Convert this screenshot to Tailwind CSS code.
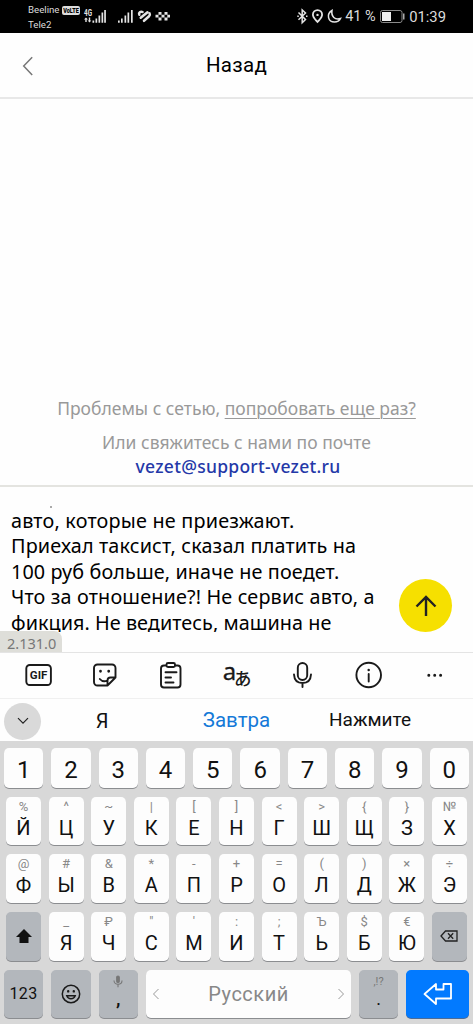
<!DOCTYPE html>
<html lang="ru">
<head>
<meta charset="utf-8">
<title>Назад</title>
<script src="https://cdn.jsdelivr.net/npm/@tailwindcss/browser@4"></script>
</head>
<body class="w-[473px] h-[1024px] overflow-hidden bg-[#fefefe] font-['Roboto',sans-serif] flex flex-col text-[#111]">

<header class="h-[33px] shrink-0 bg-black text-[#dcdcdc] flex items-start pl-7 pr-[27px]">
  <div class="pt-[3px] w-[52px] text-[9.700px] leading-[14.5px] whitespace-nowrap">
    <div class="flex items-center gap-[2px]"><span>Beeline</span><svg class="shrink-0" width="18" height="9" viewBox="0 0 18 9"><rect width="18" height="9" rx="2" fill="#dcdcdc"/><text x="1.200" y="7.300" font-family="Roboto" font-size="7.500" font-weight="900" textLength="15.500" lengthAdjust="spacingAndGlyphs">VoLTE</text></svg></div>
    <div>Tele2</div>
  </div>
  <svg class="ml-[3px] mt-2 shrink-0" width="90" height="18" viewBox="83 8 90 18" fill="#e4e4e4">
    <text x="84" y="16" font-family="Roboto" font-size="8.500" font-weight="700" textLength="8" lengthAdjust="spacingAndGlyphs">4G</text>
    <path d="M86 17.500l2 2h-1.300v2.500h-1.400v-2.500h-1.300zM89.500 22.500l-1.800-2h1.100V17.500h1.400v3h1.100z"/>
    <path d="M92.500 20.500h1.700v2.200h-1.700zM95.500 18.500h1.700v4.200h-1.700zM98.500 15.500h1.700v7.200h-1.700zM101.500 12.500h1.700v10.200h-1.700zM104.200 10h1.700v12.700h-1.700z"/>
    <path d="M118 20.500h1.700v2.200h-1.700zM121 18.500h1.700v4.200h-1.700zM124.500 15.500h1.700v7.200h-1.700zM127.500 12.500h1.700v10.200h-1.700zM131 10h1.700v12.700h-1.700z"/>
    <g fill="none" stroke="#e4e4e4" stroke-width="2.500" stroke-linecap="round"><path d="M139.300 14.800c-1-2 1.300-3.800 3.300-2.800M140.700 17.800L147.500 12.300M144 20.800L149 16.300c1-1 1-2.300.6-3"/></g>
    <path d="M158.500 12h3v2.800h-3zM164.500 12h3v2.800h-3zM155.500 14.800h3v2.800h-3zM161.500 14.800h3v2.800h-3zM167.300 14.800h2.700v2.800h-2.700zM158.500 17.600h3v2.800h-3zM164.500 17.600h3v2.800h-3z"/>
  </svg>
  <svg class="ml-auto mt-2 shrink-0" width="46" height="18" viewBox="297 8 46 18" fill="none" stroke="#e4e4e4" stroke-width="1.500">
    <path d="M299.500 12.500l7 7-3.300 3.200V10l3.300 3-7 6.800"/><path d="M298.300 16.200h1.500M307 16.200h1.500"/>
    <path d="M318.500 22c-2.600-3-4.600-4.700-4.600-7.300a4.600 4.600 0 0 1 9.200 0c0 2.600-2 4.300-4.600 7.300z" stroke-width="1.800"/><circle cx="318.500" cy="14.900" r="1.200" fill="#e4e4e4" stroke="none"/>
    <path d="M333 10.500c-6 3.500-4 11.500 2.500 11.500 3 0 5-1.300 6-3.500-5.500 1.800-9.500-2-8.500-8z"/>
  </svg>
  <span class="ml-[3px] mt-2 text-[14.500px] leading-[18px] w-[35px] whitespace-nowrap">41 %</span>
  <svg class="mt-2 shrink-0" width="26" height="18" viewBox="380 8 26 18"><rect x="380.500" y="10.500" width="21.500" height="12" rx="2" fill="none" stroke="#8a8a8a"/><path d="M382 12h9v9h-9z" fill="#eee"/><path d="M403 13.500h1.500v6H403z" fill="#aaa"/></svg>
  <span class="ml-[3px] mt-2 text-[14.800px] leading-[18px] whitespace-nowrap">01:39</span>
</header>

<nav class="h-[66px] shrink-0 border-b-2 border-[#e8e8e8] grid grid-cols-[60px_1fr_60px] items-center">
  <svg class="ml-[22px] mt-[2px]" width="12" height="22" viewBox="0 0 12 22" fill="none" stroke="#777" stroke-width="1.500"><path d="M10.200 2.200L1.700 11l8.500 9"/></svg>
  <h1 class="text-center text-[20.500px] leading-6 text-black tracking-[0.3px]">Назад</h1>
</nav>

<main class="h-[386px] shrink-0 flex flex-col items-center justify-end pb-[7px] font-['Noto_Sans',sans-serif] text-[17.500px] leading-6 text-[#999] whitespace-nowrap">
  <p>Проблемы с сетью, <a class="underline decoration-1 underline-offset-[3px]">попробовать еще раз?</a></p>
  <p class="mt-[10px]">Или свяжитесь с нами по почте</p>
  <p class="text-[#2438a8] font-medium tracking-[0.27px] pl-[3px]">vezet@support-vezet.ru</p>
</main>

<section class="h-[168px] shrink-0 relative border-t-2 border-[#e4e4e0] border-b border-b-[#e4e4e4] flex">
  <div class="pl-[11px] pt-[21px] h-[145px] overflow-hidden w-[399px] text-[19.800px] leading-[25.400px] tracking-[0.15px] text-black whitespace-nowrap font-['Noto_Sans',sans-serif]">
    <p class="tracking-[0.2px]">авто, которые не приезжают.</p>
    <p>Приехал таксист, сказал платить на</p>
    <p class="tracking-[0.12px]">100 руб больше, иначе не поедет.</p>
    <p>Что за отношение?! Не сервис авто, а</p>
    <p class="tracking-[0.05px]">фикция. Не ведитесь, машина не</p>
  </div>
  <button class="mt-[92px] size-[53px] rounded-full bg-[#f6e000] flex items-center justify-center">
    <svg width="24" height="24" viewBox="0 0 24 24" fill="none" stroke="#222" stroke-width="2.400"><path d="M12 22V3M2.500 12.500L12 3l9.500 9.500"/></svg>
  </button>
  <span class="absolute left-[50px] top-[19px] w-[2px] h-[2px] bg-[#aaa]"></span>
  <span class="absolute left-0 bottom-0 h-[21px] w-[62px] rounded-tr-lg bg-[#deded9] pl-[7px] text-[14.500px] leading-[24px] text-[#777] font-['Noto_Sans',sans-serif]">2.131.0</span>
</section>

<div class="h-[46px] shrink-0 border-b border-[#f0f0f0]">
  <svg width="473" height="45" viewBox="0 653 473 45" fill="none" stroke="#1a1a1a" stroke-width="1.900" stroke-linecap="round" stroke-linejoin="round">
    <rect x="26.300" y="665" width="24.600" height="20" rx="3.500"/>
    <text x="29.800" y="679.300" font-family="Roboto" font-size="11.500" font-weight="700" fill="#1a1a1a" stroke="none" textLength="17.500">GIF</text>
    <path d="M107.500 685.500H97.500a3.500 3.500 0 0 1-3.500-3.500V668a3.500 3.500 0 0 1 3.500-3.500h14.500a3.500 3.500 0 0 1 3.500 3.500v9.500l-8 8v-5a3 3 0 0 1 3-3h5M99.800 679c2 2.300 5 2.800 7.500 1.500"/>
    <path d="M100.500 671.200v.1M108.700 671.200v.1" stroke-width="2.800"/>
    <path d="M166 665.500h-2a3 3 0 0 0-3 3v16a3 3 0 0 0 3 3h13.500a3 3 0 0 0 3-3v-16a3 3 0 0 0-3-3h-2"/><rect x="166.500" y="663" width="8.500" height="4" rx="1.500"/><path d="M165.500 672.300h11M165.500 677.500h5.500M165.500 682.500h8"/>
    <text x="222.800" y="680" font-family="Noto Sans" font-size="24" fill="#1a1a1a" stroke="#1a1a1a" stroke-width=".3">a</text>
    <text x="234" y="684.500" font-family="Noto Sans CJK JP" font-size="17.500" font-weight="500" fill="#1a1a1a" stroke="none">あ</text>
    <rect x="297.800" y="663" width="9.400" height="17" rx="4.700"/><path d="M294 674.500c.3 5.500 3.500 8.500 8.500 8.500s8.200-3 8.500-8.500M302.500 683v4"/>
    <circle cx="368.700" cy="675" r="12.300"/><path d="M368.700 674v7.500"/><path d="M368.700 670v.1" stroke-width="2.500"/>
    <path d="M428.800 675.200v.1M434.700 675.200v.1M440.600 675.200v.1" stroke-width="3"/>
  </svg>
</div>

<div class="h-[42px] shrink-0 flex items-center text-[20px]">
  <button class="ml-1 mt-[2px] size-[37px] rounded-full bg-[#d9d9d9] flex items-center justify-center shrink-0"><svg width="12" height="8" viewBox="0 0 12 8" fill="none" stroke="#222" stroke-width="1.200"><path d="M1 1.200l5 5 5-5"/></svg></button>
  <span class="w-[122px] text-center mt-px">Я</span>
  <span class="w-[147px] text-center mt-px text-[#1479d8] text-[20.500px]">Завтра</span>
  <span class="w-[120px] text-center mt-px text-[19px]">Нажмите</span>
</div>

<div class="grow bg-[#d8d8d8] pt-[7px] flex flex-col">
  <div id="r0" class="flex gap-2 px-1 h-[40px] mb-[8.700px]"></div>
  <div id="r1" class="flex gap-[7.600px] px-[6px] h-[48.700px] mb-[9px]"></div>
  <div id="r2" class="flex gap-[7.600px] px-[6px] h-[48.700px] mb-[9px]"></div>
  <div id="r3" class="flex gap-[7.600px] px-[6px] h-[48.700px] mb-[9px]"></div>
  <div class="flex gap-2 px-1 h-[48.700px]">
    <button class="w-[39px] rounded-[5px] bg-[#b3b7bc] shadow-[0_1px_0_#8b8d90] text-[16px] tracking-[0.3px]">123</button>
    <button class="w-[39.500px] rounded-[5px] bg-[#b3b7bc] shadow-[0_1px_0_#8b8d90] flex items-center justify-center"><svg width="20" height="20" viewBox="0 0 20 20" fill="none" stroke="#1a1a1a" stroke-width="1.500" stroke-linecap="round"><circle cx="10" cy="10" r="8.700"/><path d="M5.800 11.800c1.500 4 6.900 4 8.400 0z"/><path d="M7.200 7.300v.1M12.800 7.300v.1" stroke-width="2.400"/></svg></button>
    <button class="w-[39.500px] rounded-[5px] bg-[#b3b7bc] shadow-[0_1px_0_#8b8d90] flex flex-col items-center pt-[5px]"><svg width="10" height="13" viewBox="0 0 10 13" fill="none" stroke="#777" stroke-width="1.100"><rect x="3.700" y="1" width="2.600" height="6.500" rx="1.300" fill="#777"/><path d="M1 5.500c0 5 8 5 8 0M5 9.300v3"/></svg><span class="text-[20px] leading-5 font-medium">,</span></button>
    <button class="w-[205px] rounded-[5px] bg-[#fdfdfd] shadow-[0_1px_0_#8b8d90] flex items-center justify-between px-[6px] text-[20px] text-[#888] tracking-[0.5px]">
      <svg width="8" height="12" viewBox="0 0 8 12" fill="none" stroke="#999"><path d="M6.500 1L1.500 6l5 5"/></svg><span>Русский</span><svg width="8" height="12" viewBox="0 0 8 12" fill="none" stroke="#999"><path d="M1.500 1l5 5-5 5"/></svg>
    </button>
    <button class="w-[39px] rounded-[5px] bg-[#b3b7bc] shadow-[0_1px_0_#8b8d90] flex flex-col items-center pt-[5px]"><span class="text-[11px] leading-[14px] text-[#777]">,!?</span><span class="text-[18px] leading-5">.</span></button>
    <button class="w-[63px] rounded-[5px] bg-[#027aff] shadow-[0_1px_0_#4b6c98] flex items-center justify-center"><svg width="30" height="24" viewBox="0 0 30 24" fill="none" stroke="#fff" stroke-width="1.800" stroke-linejoin="round"><path d="M1.500 12L13 2v5.500h7.500V2H28v14.500H13V22z"/></svg></button>
  </div>
</div>

<script>
const rows = [
  ['Й%','Ц^','У~','К|','Е[','Н]','Г<','Ш>','Щ{','З}','Х№'],
  ['Ф@','Ы#','В&','А*','П-','Р+','О=','Л(','Д)','Ж×','Э÷'],
  ['Я_','Ч₽','С"',"М'",'И:','Т;','ЬЪ','Б$','Ю€']
];
const esc = s => s.replace('&','&amp;').replace('<','&lt;');
const key = k => `<button class="flex-1 rounded-[5px] bg-[#fdfdfd] shadow-[0_1px_0_#8b8d90] flex flex-col items-center pt-[2px]"><span class="text-[13px] leading-4 text-[#888]">${esc(k[1])}</span><span class="text-[20px] leading-6 mt-px">${k[0]}</span></button>`;
const r = n => document.getElementById('r' + n);
r(0).innerHTML = [...'1234567890'].map(d => `<button class="flex-1 rounded-[5px] bg-[#fdfdfd] shadow-[0_1px_0_#8b8d90] text-[24px] leading-[40px] pt-[2px]">${d}</button>`).join('');
r(1).innerHTML = rows[0].map(key).join('');
r(2).innerHTML = rows[1].map(key).join('');
const side = s => `<button class="flex-1 rounded-[5px] bg-[#b3b7bc] shadow-[0_1px_0_#8b8d90] flex items-center justify-center">${s}</button>`;
r(3).innerHTML = side('<svg width="16" height="15" viewBox="0 0 16 15" fill="#111"><path d="M8 0l8 8h-3.500v6h-9V8H0z"/></svg>')
  + rows[2].map(key).join('')
  + side('<svg width="18" height="12" viewBox="0 0 18 12" fill="none" stroke="#222" stroke-width="1.300"><path d="M1 6l4.500-5H17v10H5.500zM8 3.300l5.200 5.400M13.200 3.300L8 8.700"/></svg>');
</script>
</body>
</html>
